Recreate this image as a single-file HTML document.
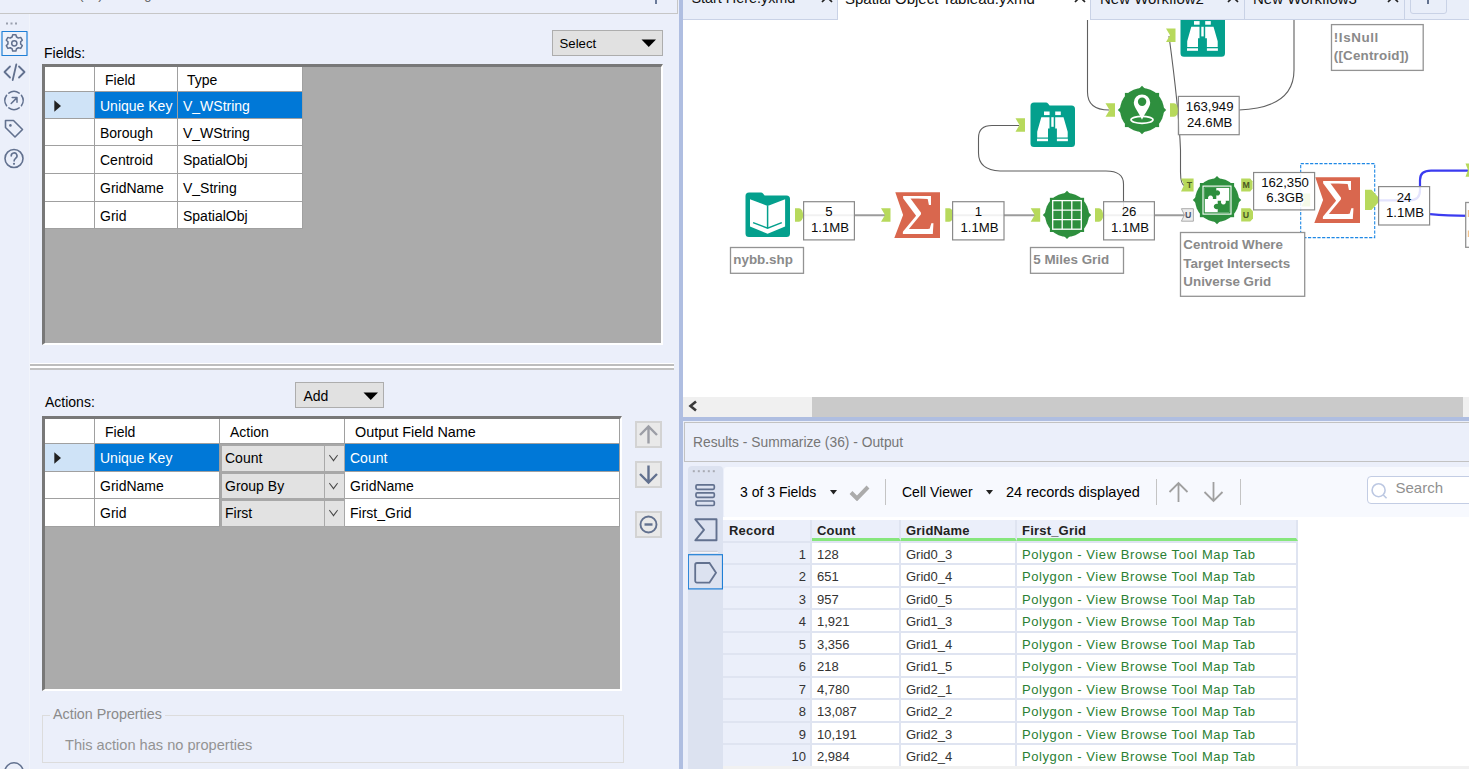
<!DOCTYPE html>
<html>
<head>
<meta charset="utf-8">
<title>Alteryx Designer</title>
<style>
html,body{margin:0;padding:0;}
body{width:1469px;height:769px;overflow:hidden;position:relative;background:#ebeffa;font-family:"Liberation Sans",sans-serif;font-size:14px;color:#000;}
.abs{position:absolute;}
.t{position:absolute;white-space:nowrap;line-height:1;}
/* ---------- left panel ---------- */
#left{position:absolute;left:0;top:0;width:679px;height:769px;background:#ebeffa;overflow:hidden;}
#divider{position:absolute;left:679px;top:0;width:4px;height:769px;background:#afbee1;}
.grid{position:absolute;background:#ababab;border-top:3px solid #787878;border-left:3px solid #787878;border-right:2px solid #fff;border-bottom:2px solid #fff;box-sizing:border-box;overflow:hidden;}
.cell{position:absolute;background:#fff;box-sizing:border-box;border-right:1px solid #a0a0a0;border-bottom:1px solid #a0a0a0;font-size:14px;line-height:1;white-space:nowrap;overflow:hidden;}
.cell span{position:absolute;left:6px;}
.sel{background:#0078d7;color:#fff;}
.rh{background:#fff;}
.rhsel{background:#cfe3f7;}
.btn{position:absolute;background:#e1e1e1;border:1px solid #adadad;box-sizing:border-box;}
/* ---------- right panel ---------- */
.tab{background:#e9eef9;border-right:1px solid #c9d2e6;border-bottom:1px solid #c9d2e6;box-sizing:border-box;}
.tabt{top:-9.500px;font-size:15px;color:#111;}
.sbtn{width:27px;height:27px;border:2px solid #d3d3d3;background:#e9e9e9;box-sizing:border-box;}
.sbtn svg{position:absolute;left:-2px;top:-2px;}
.combo{background:#e2e2e2;border:2px solid #a8a8a8;border-right:1px solid #a8a8a8;border-bottom:1px solid #a8a8a8;}
.combo i{position:absolute;right:0;top:0;bottom:0;width:19px;border-left:1px solid #a9a9a9;}
.combo i:after{content:"";position:absolute;left:5px;top:6px;width:6px;height:6px;border-right:1.3px solid #444;border-bottom:1.3px solid #444;transform:rotate(45deg) scale(1.05,1.05) skew(8deg,8deg);}
#right{position:absolute;left:683px;top:0;width:786px;height:769px;background:#fff;overflow:hidden;}

.rr{position:absolute;left:40px;width:576px;font-size:13px;}
.rc{position:absolute;top:0;bottom:0;box-sizing:border-box;background:#fff;border-right:2px solid #dfe4f1;border-bottom:2px solid #dfe4f1;overflow:hidden;white-space:nowrap;}
.rc span{position:absolute;left:5px;top:5px;line-height:1;color:#333;}
.c0{left:0;width:89px;background:#ebeffa;}
.c0 span{left:auto;right:4px;}
.c1{left:89px;width:89px;}
.c2{left:178px;width:116px;}
.c3{left:294px;width:281px;}
.grn span{color:#2a8033;letter-spacing:0.58px;}
.hd .rc{background:#ebeffa;font-weight:bold;border-bottom:none;}
.hd .rc span{color:#222;top:4px;letter-spacing:0.2px;}
.hd .gu{border-bottom:3px solid #86e67c;}
</style>
</head>
<body>
<div id="left">
  <!-- title bar -->
  <div class="abs" style="left:0;top:0;width:677px;height:13px;border-bottom:1px solid #c6c6c6;border-right:1px solid #c6c6c6;"></div>
  <div class="t" id="ttl" style="left:10px;top:-12.500px;font-size:13px;color:#5b5b5b;">Summarize (36) - Configuration</div>
  <div class="abs" style="left:655px;top:0;width:2px;height:4px;background:#6a7a9a;"></div>

  <!-- sidebar -->
  <div class="abs" style="left:0;top:14px;width:29px;height:755px;background:#ebeffa;border-right:1px solid #f1f4fb;"></div>
  <svg class="abs" style="left:0;top:14px;" width="30" height="755" viewBox="0 14 30 755" fill="none" stroke="#62718f" stroke-width="1.6" stroke-linecap="round" stroke-linejoin="round">
    <g stroke="none" fill="#9aa0ad"><rect x="6" y="22.5" width="2" height="2"/><rect x="10.5" y="22.5" width="2" height="2"/><rect x="15" y="22.5" width="2" height="2"/></g>
    <rect x="2" y="31.5" width="25" height="24" fill="#eef2fb" stroke="#1f7fd6" stroke-width="1.2"/>
    <!-- gear -->
    <g id="gear" transform="translate(14.3,43.3)">
      <path d="M-1.6,-8.6h3.2l.6,2.3a6.5,6.5 0 0 1 1.9,1.1l2.3,-.7l1.6,2.8l-1.7,1.6a6.5,6.5 0 0 1 0,2.2l1.7,1.6l-1.6,2.8l-2.3,-.7a6.5,6.5 0 0 1 -1.9,1.1l-.6,2.3h-3.2l-.6,-2.3a6.5,6.5 0 0 1 -1.9,-1.1l-2.3,.7l-1.6,-2.8l1.7,-1.6a6.5,6.5 0 0 1 0,-2.2l-1.7,-1.6l1.6,-2.8l2.3,.7a6.5,6.5 0 0 1 1.9,-1.1z" stroke-width="1.5"/>
      <circle r="2.6" stroke-width="1.5"/>
    </g>
    <!-- code -->
    <path d="M10,66.5l-5.5,5.5l5.5,5.5M19,66.5l5.5,5.5l-5.5,5.5M16.3,64.5l-3.6,15.5" stroke-width="1.8"/>
    <!-- share circle -->
    <g transform="translate(14,100.5)">
      <path d="M-5.200,-7.400a9,9 0 0 1 10.400,0M7.400,-5.200a9,9 0 0 1 0,10.400M5.200,7.400a9,9 0 0 1 -10.400,0M-7.400,5.200a9,9 0 0 1 0,-10.400" stroke-width="1.500"/>
      <path d="M-2.800,3l5.600,-5.600M-1.800,-3h4.800v4.800" stroke-width="1.500"/>
    </g>
    <!-- tag -->
    <g transform="translate(14,129)">
      <path d="M-8.5,-8.5h8l9,9l-7.5,7.5l-9.5,-9.5z"/>
      <circle cx="-3.6" cy="-3.6" r="1.3" fill="#62718f" stroke="none"/>
    </g>
    <!-- help -->
    <g transform="translate(14,158.5)">
      <circle r="9"/>
      <path d="M-2.8,-2.6a2.9,2.9 0 1 1 4.4,2.4c-1,.7 -1.5,1.2 -1.5,2.6" stroke-width="1.6"/>
      <circle cx="0" cy="5.3" r="1.1" fill="#62718f" stroke="none"/>
    </g>
    <!-- bottom circle -->
    <circle cx="14" cy="772" r="9.2"/>
  </svg>

  <!-- Fields -->
  <div class="t" id="lblFields" style="left:44px;top:46px;font-size:14px;">Fields:</div>
  <div class="btn" style="left:552px;top:30px;width:111px;height:26px;"></div>
  <div class="t" id="lblSelect" style="left:559.5px;top:36.5px;font-size:13.2px;">Select</div>
  <svg class="abs" style="left:641px;top:39px;" width="16" height="9"><path d="M0.5,0.5h14.5l-7.25,7.5z" fill="#000"/></svg>

  <div class="grid" id="g1" style="left:42px;top:64px;width:621px;height:281px;">
    <div class="cell rh" style="left:0;top:0;width:50px;height:25px;"></div>
    <div class="cell" style="left:50px;top:0;width:83px;height:25px;"><span style="left:10px;top:6px;">Field</span></div>
    <div class="cell" style="left:133px;top:0;width:125px;height:25px;"><span style="left:9px;top:6px;">Type</span></div>
    <div class="cell rhsel" style="left:0;top:25px;width:50px;height:27px;"><svg class="abs" style="left:8.5px;top:7.5px;" width="8" height="13"><path d="M0.3,0.3v11.4l6.7,-5.7z" fill="#222"/></svg></div>
    <div class="cell sel" style="left:50px;top:25px;width:83px;height:27px;"><span style="left:5px;top:7px;">Unique Key</span></div>
    <div class="cell sel" style="left:133px;top:25px;width:125px;height:27px;"><span style="left:5px;top:7px;">V_WString</span></div>
    <div class="cell rh" style="left:0;top:52px;width:50px;height:27px;"></div>
    <div class="cell" style="left:50px;top:52px;width:83px;height:27px;"><span style="left:5px;top:7px;">Borough</span></div>
    <div class="cell" style="left:133px;top:52px;width:125px;height:27px;"><span style="left:5px;top:7px;">V_WString</span></div>
    <div class="cell rh" style="left:0;top:79px;width:50px;height:28px;"></div>
    <div class="cell" style="left:50px;top:79px;width:83px;height:28px;"><span style="left:5px;top:7px;">Centroid</span></div>
    <div class="cell" style="left:133px;top:79px;width:125px;height:28px;"><span style="left:5px;top:7px;">SpatialObj</span></div>
    <div class="cell rh" style="left:0;top:107px;width:50px;height:28px;"></div>
    <div class="cell" style="left:50px;top:107px;width:83px;height:28px;"><span style="left:5px;top:7px;">GridName</span></div>
    <div class="cell" style="left:133px;top:107px;width:125px;height:28px;"><span style="left:5px;top:7px;">V_String</span></div>
    <div class="cell rh" style="left:0;top:135px;width:50px;height:27px;"></div>
    <div class="cell" style="left:50px;top:135px;width:83px;height:27px;"><span style="left:5px;top:7px;">Grid</span></div>
    <div class="cell" style="left:133px;top:135px;width:125px;height:27px;"><span style="left:5px;top:7px;">SpatialObj</span></div>
  </div>

  <!-- separator -->
  <div class="abs" style="left:30px;top:363px;width:644px;height:7px;background:#fff;"></div>
  <div class="abs" style="left:30px;top:364px;width:644px;height:2px;background:#bdbdbd;"></div>
  <div class="abs" style="left:30px;top:368px;width:644px;height:2px;background:#c2c2c2;"></div>

  <!-- Actions -->
  <div class="t" id="lblActions" style="left:45px;top:395px;font-size:14px;">Actions:</div>
  <div class="btn" style="left:295px;top:382px;width:89px;height:26px;"></div>
  <div class="t" id="lblAdd" style="left:303.5px;top:389px;font-size:14px;">Add</div>
  <svg class="abs" style="left:363px;top:391.5px;" width="16" height="9"><path d="M0.5,0.5h14.5l-7.25,7.5z" fill="#000"/></svg>

  <div class="grid" id="g2" style="left:42px;top:416px;width:580px;height:275px;">
    <div class="cell rh" style="left:0;top:0;width:50px;height:25px;"></div>
    <div class="cell" style="left:50px;top:0;width:125px;height:25px;"><span style="left:10px;top:6px;">Field</span></div>
    <div class="cell" style="left:175px;top:0;width:125px;height:25px;"><span style="left:10px;top:6px;">Action</span></div>
    <div class="cell" style="left:300px;top:0;width:275px;height:25px;"><span style="left:10px;top:6px;font-size:14.4px;">Output Field Name</span></div>
    <div class="cell rhsel" style="left:0;top:25px;width:50px;height:28px;"><svg class="abs" style="left:8.5px;top:7.5px;" width="8" height="13"><path d="M0.3,0.3v11.4l6.7,-5.7z" fill="#222"/></svg></div>
    <div class="cell sel" style="left:50px;top:25px;width:125px;height:28px;"><span style="left:5px;top:7px;">Unique Key</span></div>
    <div class="cell combo" style="left:175px;top:25px;width:125px;height:28px;"><span style="top:5px;left:3px;">Count</span><i></i></div>
    <div class="cell sel" style="left:300px;top:25px;width:275px;height:28px;"><span style="left:5px;top:7px;">Count</span></div>
    <div class="cell rh" style="left:0;top:53px;width:50px;height:27px;"></div>
    <div class="cell" style="left:50px;top:53px;width:125px;height:27px;"><span style="left:5px;top:7px;">GridName</span></div>
    <div class="cell combo" style="left:175px;top:53px;width:125px;height:27px;"><span style="top:5px;left:3px;">Group By</span><i></i></div>
    <div class="cell" style="left:300px;top:53px;width:275px;height:27px;"><span style="left:5px;top:7px;">GridName</span></div>
    <div class="cell rh" style="left:0;top:80px;width:50px;height:28px;"></div>
    <div class="cell" style="left:50px;top:80px;width:125px;height:28px;"><span style="left:5px;top:7px;">Grid</span></div>
    <div class="cell combo" style="left:175px;top:80px;width:125px;height:28px;"><span style="top:5px;left:3px;">First</span><i></i></div>
    <div class="cell" style="left:300px;top:80px;width:275px;height:28px;"><span style="left:5px;top:7px;">First_Grid</span></div>
  </div>

  <!-- side buttons -->
  <div class="abs sbtn" style="left:635px;top:421px;"><svg width="27" height="27" viewBox="0 0 27 27" fill="none" stroke="#9c9ea6" stroke-width="1.8"><path d="M13.5,22.500v-16.500M5,14l8.500,-8.500l8.500,8.500" stroke-width="2.400"/></svg></div>
  <div class="abs sbtn" style="left:635px;top:461px;"><svg width="27" height="27" viewBox="0 0 27 27" fill="none" stroke="#62718f" stroke-width="1.8"><path d="M13.5,4.500v16.500M5,13l8.500,8.500l8.500,-8.500" stroke-width="2.400"/></svg></div>
  <div class="abs sbtn" style="left:635px;top:511px;"><svg width="27" height="27" viewBox="0 0 27 27" fill="none" stroke="#62718f" stroke-width="1.5"><circle cx="13.5" cy="13.5" r="8" stroke-width="1.900"/><path d="M9.500,13.500h8" stroke-width="2.400"/></svg></div>

  <!-- Action properties -->
  <div class="abs" style="left:42px;top:715px;width:582px;height:48px;border:1px solid #dcdcdc;box-sizing:border-box;"></div>
  <div class="t" id="lblAP" style="left:50px;top:707px;font-size:14.3px;color:#8a8a8a;background:#ebeffa;padding:0 3px;">Action Properties</div>
  <div class="t" id="lblNoProp" style="left:65px;top:738px;font-size:14.6px;color:#939393;">This action has no properties</div>
</div>
<div id="divider"></div>

<div id="right">
  <!-- tabs -->
  <div class="abs" style="left:0;top:0;width:786px;height:20px;background:#e9eef9;border-bottom:1px solid #c9d2e6;box-sizing:border-box;"></div>
  <div class="abs" style="left:154px;top:0;width:253px;height:20px;background:#fff;"></div>
  <div class="abs" style="left:154px;top:0;width:1px;height:20px;background:#c9d2e6;"></div>
  <div class="abs" style="left:407px;top:0;width:1px;height:20px;background:#c9d2e6;"></div>
  <div class="abs" style="left:561px;top:0;width:1px;height:20px;background:#c9d2e6;"></div>
  <div class="abs" style="left:721px;top:0;width:1px;height:20px;background:#c9d2e6;"></div>
  <div class="abs" style="left:727px;top:-10px;width:37px;height:24px;border:1px solid #c9d2e6;border-radius:3px;box-sizing:border-box;"></div>
  <div class="abs" style="left:744px;top:0;width:2px;height:4px;background:#62718f;"></div>
  <div class="t tabt" id="tab1" style="left:8.400px;top:-9px;font-size:14.400px;">Start Here.yxmd</div>
  <div class="t tabt" id="tab2" style="left:162px;">Spatial Object Tableau.yxmd</div>
  <div class="t tabt" id="tab3" style="left:417px;">New Workflow2</div>
  <div class="t tabt" id="tab4" style="left:570px;">New Workflow3</div>
  <svg class="abs" style="left:138px;top:-9.300px;" width="12" height="12"><path d="M1,1l10,10M11,1l-10,10" stroke="#222" stroke-width="1.700"/></svg>
  <svg class="abs" style="left:391px;top:-9.300px;" width="12" height="12"><path d="M1,1l10,10M11,1l-10,10" stroke="#222" stroke-width="1.700"/></svg>
  <svg class="abs" style="left:544px;top:-9.300px;" width="12" height="12"><path d="M1,1l10,10M11,1l-10,10" stroke="#222" stroke-width="1.700"/></svg>
  <svg class="abs" style="left:704px;top:-9.300px;" width="12" height="12"><path d="M1,1l10,10M11,1l-10,10" stroke="#222" stroke-width="1.700"/></svg>

  <!-- canvas : svg coords are absolute page coords (viewBox offset) -->
  <svg class="abs" id="cv" style="left:0;top:20px;" width="786" height="377" viewBox="683 20 786 377">
    <defs>
      <g id="tealbox"><path d="M3.500,0h12.500q1.200,0 2,1l1.600,2.100h21.900a3.500,3.500 0 0 1 3.500,3.500v34.600a3.500,3.500 0 0 1 -3.500,3.500h-37.500a3.500,3.500 0 0 1 -3.500,-3.500v-37.700a3.500,3.500 0 0 1 3.500,-3.500z" fill="#04a08d"/></g>
      <g id="browse">
        <use href="#tealbox"/>
        <g fill="#fff">
          <rect x="14" y="9.100" width="5.600" height="3.600"/><rect x="25.200" y="9.100" width="5.600" height="3.600"/>
          <path d="M11.300,14.800h8.200v11.400h-1.500v8.900h-10.800v-5.800z"/>
          <path d="M33.500,14.800h-8.300v11.400h1.700v8.900h10.800v-5.800z"/>
          <rect x="21.300" y="14.800" width="2.400" height="9.600"/>
          <rect x="7" y="36.300" width="11" height="2.500"/><rect x="26.900" y="36.300" width="11" height="2.500"/>
        </g>
      </g>
      <g id="inputdata">
        <use href="#tealbox"/>
        <path d="M5,6.800l17.600,6.800l17.500,-6.800v27.200l-17.500,7.400l-17.600,-7.400z" fill="#fff"/>
        <path d="M22.600,13.600v22" stroke="#04a08d" stroke-width="1.500" fill="none"/>
        <path d="M8.100,30.200l14.500,5.600l14.200,-5.600" stroke="#04a08d" stroke-width="1.500" fill="none"/>
      </g>
      <g id="summ">
        <path d="M1,0h44.700v45.700h-45.700l8.800,-22.800z" fill="#d9674e"/>
        <text x="24.300" y="41.900" font-family="Liberation Serif, serif" font-size="56.500" fill="#fff" text-anchor="middle" textLength="36" lengthAdjust="spacingAndGlyphs">&#931;</text>
      </g>
      <g id="badge" fill="#2e8f3e"><circle r="21.900"/><rect x="-17.100" y="-17.100" width="34.200" height="34.200"/><rect x="-17.100" y="-17.100" width="34.200" height="34.200" transform="rotate(45)"/></g>
      <g id="ain"><path d="M0,0h9.500v13.400h-9.500l4,-6.700z" fill="#b7d95c"/></g>
      <g id="aout"><path d="M0,0h4a4.200,6.700 0 0 1 0,13.400h-4z" fill="#b7d95c"/></g>
    </defs>

    <!-- connection lines -->
    <g fill="none" stroke="#9c9c9c" stroke-width="2">
      <path d="M803,215.300H885"/>
      <path d="M952,215.300H1035"/>
      <path d="M1103,215.300H1185"/>
    </g>
    <g fill="none" stroke="#5f5f5f" stroke-width="1.100">
      <path d="M1123.500,215V184Q1123.500,171 1106,171H1000Q978.500,170 978.500,153V138Q978.500,125.500 992,125.500H1019"/>
      <path d="M1087.500,20V92Q1087.500,110 1109,110"/>
      <path d="M1169,36Q1179,110 1180.500,150V172Q1180.500,185 1185,186"/>
      <path d="M1239,110Q1294,108 1294,70V20"/>
    </g>
    <g fill="none" stroke="#3b3bf0" stroke-width="2.200">
      <path d="M1378,200.300H1410Q1420,200.300 1420,190V180Q1420,170.700 1431,170.700H1469"/>
      <path d="M1430,214.200Q1447,215.800 1469,215.800"/>
    </g>

    <!-- tools -->
    <use href="#inputdata" x="745" y="192.400"/>
    <use href="#aout" x="795" y="208.300"/>
    <use href="#ain" x="881" y="208.300"/>
    <use href="#summ" x="894.300" y="192.200"/>
    <use href="#aout" x="945.300" y="208.300"/>
    <use href="#ain" x="1030.700" y="208.300"/>
    <g transform="translate(1067,214.900)"><use href="#badge"/>
      <g fill="none" stroke="#fff" stroke-width="1.300"><rect x="-14.300" y="-14.300" width="28.600" height="28.600"/><path d="M-4.800,-14.300v28.600M4.800,-14.300v28.600M-14.300,-4.800h28.600M-14.300,4.800h28.600"/></g>
    </g>
    <use href="#aout" x="1095" y="208.300"/>

    <use href="#ain" x="1015.500" y="118.300"/>
    <use href="#browse" x="1030" y="102.400"/>

    <use href="#ain" x="1166" y="28.500"/>
    <use href="#browse" x="1180" y="12"/>

    <use href="#ain" x="1105.500" y="103.300"/>
    <g transform="translate(1142,110)"><use href="#badge"/>
      <path d="M0,-15.600a8.200,8.200 0 0 1 8.200,8.200c0,5 -5.200,10.200 -8.200,17.200c-3,-7 -8.200,-12.200 -8.200,-17.200a8.200,8.200 0 0 1 8.200,-8.200z" fill="#fff"/>
      <circle cx="0.100" cy="-8.300" r="4.200" fill="#2e8f3e"/>
      <ellipse cx="0" cy="9.800" rx="11" ry="3.500" fill="none" stroke="#fff" stroke-width="1.700"/>
    </g>
    <use href="#aout" x="1170" y="103.300"/>

    <!-- spatial match -->
    <path d="M1181,178.500h12.600v13.100h-12.600l3,-6.550z" fill="#b7d95c"/>
    <path d="M1181.400,208.700h12v12.500h-12l3,-6.250z" fill="#ededed" stroke="#a3a3a3" stroke-width="0.900"/>
    <g transform="translate(1217,200.100)"><use href="#badge"/>
      <rect x="-14" y="-14" width="28" height="28" fill="none" stroke="#fff" stroke-width="1.100"/>
      <rect x="-12.200" y="-12.200" width="24.400" height="24.400" fill="#fff"/>
      <path d="M-12.200,-12.200h11.500v2.700a2.600,2.600 0 1 1 0,4.600v3.900h-3.600a2.500,2.500 0 1 0 -4.400,0h-3.500z" fill="#2e8f3e"/>
      <path d="M12.200,12.200h-11.500v-3.400a2.700,2.700 0 1 1 0,-4.800v-3.300h3.500a2.500,2.500 0 1 0 4.400,0h3.600z" fill="#2e8f3e"/>
    </g>
    <path d="M1241.200,178.500h9l2.300,2.800v7.500l-2.300,2.800h-9z" fill="#b7d95c"/>
    <path d="M1241.200,208.300h9l2.800,3v7.100l-2.800,3h-9z" fill="#b7d95c"/>
    <g font-family="Liberation Sans, sans-serif" font-size="8.800" font-weight="bold" fill="#4b5a23" text-anchor="middle">
      <text x="1189.400" y="187.900">T</text><text x="1188.300" y="217.700" fill="#4a5268">U</text>
      <text x="1246.200" y="187.900">M</text><text x="1246" y="217.700">U</text>
    </g>

    <rect x="1300.700" y="163.600" width="74" height="74" fill="none" stroke="#1e88e5" stroke-width="1.100" stroke-dasharray="3.200,1.500"/>
    <path d="M1301.500,193.400h8.700v13.100h-8.700l3,-6.550z" fill="#b7d95c"/>
    <use href="#summ" x="1314.300" y="177.200"/>
    <path d="M1365,189.800h6.500l6.600,7.300v5.600l-6.600,7.300h-6.500z" fill="#b7d95c"/>
    <path d="M1465.500,163.500h6v13.200h-6l2.500,-6.600z" fill="#b7d95c"/>

    <!-- count boxes -->
    <g fill="#fff" fill-opacity="0.860" stroke="#8a8a8a" stroke-width="1.200">
      <rect x="803.600" y="201.700" width="50.800" height="38.200"/>
      <rect x="952.600" y="201.700" width="51.400" height="38.200"/>
      <rect x="1103.600" y="201.700" width="50.800" height="38.200"/>
      <rect x="1178.400" y="96.400" width="60.800" height="38.300"/>
      <rect x="1253.600" y="172.500" width="61" height="37.400"/>
      <rect x="1378.600" y="186.600" width="51" height="38.400"/>
    </g>
    <g font-family="Liberation Sans, sans-serif" font-size="13.200" fill="#0c0c0c" text-anchor="middle">
      <text x="829" y="216.300">5</text><text x="830" y="231.700">1.1MB</text>
      <text x="978.500" y="216.300">1</text><text x="979.500" y="231.700">1.1MB</text>
      <text x="1129" y="216.300">26</text><text x="1130" y="231.700">1.1MB</text>
      <text x="1209.700" y="111.300">163,949</text><text x="1209.700" y="126.600">24.6MB</text>
      <text x="1285" y="187.300">162,350</text><text x="1285" y="202.300">6.3GB</text>
      <text x="1404" y="201.700">24</text><text x="1405" y="217">1.1MB</text>
    </g>

    <!-- annotation labels -->
    <g fill="#fff" stroke="#939393" stroke-width="1.300">
      <rect x="730.500" y="247.500" width="73" height="25.800"/>
      <rect x="1030.500" y="247.500" width="93" height="25.800"/>
      <rect x="1180.500" y="232.500" width="124.200" height="63.800"/>
      <rect x="1331.500" y="24.600" width="91.700" height="45.800"/>
      <rect x="1465.700" y="202.500" width="10" height="44.800"/>
    </g>
    <g font-family="Liberation Sans, sans-serif" font-size="13.400" font-weight="bold" fill="#8a8a8a">
      <text x="733.300" y="263.500">nybb.shp</text>
      <text x="1033.300" y="263.500">5 Miles Grid</text>
      <text x="1183.300" y="249">Centroid Where</text>
      <text x="1183.300" y="267.700">Target Intersects</text>
      <text x="1183.300" y="286.400">Universe Grid</text>
      <text x="1333.800" y="42" textLength="44.500">!IsNull</text>
      <text x="1333.800" y="60.300" textLength="75">([Centroid])</text>
    </g>
    <rect x="1467.800" y="210" width="1.500" height="7" fill="#f2c38e"/><rect x="1467.800" y="230.500" width="1.500" height="6.500" fill="#f2c38e"/>
  </svg>
  <!-- scrollbar -->
  <div class="abs" style="left:0;top:397px;width:786px;height:20px;background:#f0f0f0;"></div>
  <div class="abs" style="left:129px;top:397px;width:651px;height:20px;background:#cacaca;"></div>
  <svg class="abs" style="left:5px;top:400px;" width="10" height="12"><path d="M8,1.500l-5.500,4.500l5.500,4.500" fill="none" stroke="#3a3a3a" stroke-width="2.600"/></svg>
  <!-- blue separator -->
  <div class="abs" style="left:0;top:417px;width:786px;height:4px;background:#afbee1;"></div>
  <!-- results header -->
  <div class="abs" style="left:0;top:421px;width:786px;height:348px;background:#ebeffa;"></div>
  <div class="abs" style="left:1px;top:422px;width:790px;height:40px;border:1px solid #c2c2c2;box-sizing:border-box;"></div>
  <div class="t" id="rtitle" style="left:10px;top:436px;font-size:13.8px;color:#767676;">Results - Summarize (36) - Output</div>
  <!-- results sidebar -->
  <div class="abs" style="left:5px;top:466px;width:35px;height:310px;background:#dce2f0;border-radius:4px 4px 0 0;"></div>
  <svg class="abs" style="left:5px;top:466px;" width="36" height="140" viewBox="0 0 36 140" fill="none" stroke="#62718f" stroke-width="1.700">
    <g stroke="none" fill="#a9abb3"><rect x="4.800" y="4.200" width="2" height="2"/><rect x="9.800" y="4.200" width="2" height="2"/><rect x="14.800" y="4.200" width="2" height="2"/><rect x="19.800" y="4.200" width="2" height="2"/><rect x="24.800" y="4.200" width="2" height="2"/></g>
    <rect x="8" y="18.800" width="18.300" height="4.500" rx="1.200"/><rect x="8" y="26.800" width="18.300" height="4.500" rx="1.200"/><rect x="8" y="35" width="18.300" height="4.500" rx="1.200"/>
    <path d="M7.300,53.300h21.200v21h-21.200l8.700,-10.500z" stroke-width="1.900" stroke-linejoin="round"/>
    <path d="M2.500,85.300h27" stroke="#c6c8cf" stroke-width="1"/><path d="M3,86.500h27" stroke="#f4f6fb" stroke-width="1.200"/>
    <rect x="0.300" y="88.700" width="34.200" height="34.200" fill="#dce2f0" stroke="#1f7fd6" stroke-width="1.200"/>
    <path d="M9,97h12.500l6.500,9.800l-6.500,9.800h-12.500a1.800,1.800 0 0 1 -1.800,-1.800v-16a1.800,1.800 0 0 1 1.800,-1.800z" stroke-width="1.800"/>
  </svg>
  <!-- toolbar -->
  <div class="abs" style="left:41px;top:466.500px;width:746px;height:51px;background:#f7f9fe;border-radius:3px 0 0 3px;"></div>
  <div class="t" id="tb1" style="left:57px;top:484.700px;font-size:14px;">3 of 3 Fields</div>
  <svg class="abs" style="left:147px;top:490px;" width="8" height="5"><path d="M0,0h7l-3.500,4.500z" fill="#222"/></svg>
  <svg class="abs" style="left:166px;top:483px;" width="22" height="18"><path d="M2,9.500l6,6l11,-11.500" fill="none" stroke="#ababab" stroke-width="4"/></svg>
  <div class="abs" style="left:202px;top:479px;width:1px;height:26px;background:#c4c4c4;"></div>
  <div class="t" id="tb2" style="left:219px;top:484.700px;font-size:14px;">Cell Viewer</div>
  <svg class="abs" style="left:303px;top:490px;" width="8" height="5"><path d="M0,0h7l-3.500,4.500z" fill="#222"/></svg>
  <div class="t" id="tb3" style="left:323px;top:484.500px;font-size:14.500px;">24 records displayed</div>
  <div class="abs" style="left:473px;top:479px;width:1px;height:26px;background:#c4c4c4;"></div>
  <svg class="abs" style="left:484px;top:481px;" width="60" height="22" fill="none" stroke="#a0a0a0" stroke-width="1.800"><path d="M11.500,21v-19M2.500,11l9,-9l9,9"/><path d="M46.500,1v19M37.500,11l9,9l9,-9"/></svg>
  <div class="abs" style="left:557px;top:479px;width:1px;height:26px;background:#c4c4c4;"></div>
  <div class="abs" style="left:684px;top:476px;width:120px;height:28px;background:#fff;border:1.300px solid #c3cde4;border-radius:4px;box-sizing:border-box;"></div>
  <svg class="abs" style="left:686px;top:480px;" width="22" height="22" fill="none" stroke="#bcc8e2" stroke-width="1.600"><circle cx="9.600" cy="10.200" r="6.500"/><path d="M14.300,15l3.300,3.300"/></svg>
  <div class="t" id="tbs" style="left:712.500px;top:480px;font-size:15px;color:#909090;">Search</div>
  <!-- table -->
  <div class="abs" style="left:40px;top:517px;width:746px;height:252px;background:#fff;"></div>
  <div class="abs" style="left:40px;top:541px;width:575px;height:2px;background:#dfe4f1;"></div>
  <div class="rr hd" style="top:520px;height:21px;"><div class="rc c0"><span style="left:6px;right:auto;">Record</span></div><div class="rc c1 gu"><span>Count</span></div><div class="rc c2 gu"><span>GridName</span></div><div class="rc c3 gu"><span>First_Grid</span></div></div>
  <div class="rr" style="top:543px;height:22px;"><div class="rc c0"><span>1</span></div><div class="rc c1"><span>128</span></div><div class="rc c2"><span>Grid0_3</span></div><div class="rc c3 grn"><span>Polygon - View Browse Tool Map Tab</span></div></div>
  <div class="rr" style="top:565px;height:23px;"><div class="rc c0"><span>2</span></div><div class="rc c1"><span>651</span></div><div class="rc c2"><span>Grid0_4</span></div><div class="rc c3 grn"><span>Polygon - View Browse Tool Map Tab</span></div></div>
  <div class="rr" style="top:588px;height:22px;"><div class="rc c0"><span>3</span></div><div class="rc c1"><span>957</span></div><div class="rc c2"><span>Grid0_5</span></div><div class="rc c3 grn"><span>Polygon - View Browse Tool Map Tab</span></div></div>
  <div class="rr" style="top:610px;height:23px;"><div class="rc c0"><span>4</span></div><div class="rc c1"><span>1,921</span></div><div class="rc c2"><span>Grid1_3</span></div><div class="rc c3 grn"><span>Polygon - View Browse Tool Map Tab</span></div></div>
  <div class="rr" style="top:633px;height:22px;"><div class="rc c0"><span>5</span></div><div class="rc c1"><span>3,356</span></div><div class="rc c2"><span>Grid1_4</span></div><div class="rc c3 grn"><span>Polygon - View Browse Tool Map Tab</span></div></div>
  <div class="rr" style="top:655px;height:23px;"><div class="rc c0"><span>6</span></div><div class="rc c1"><span>218</span></div><div class="rc c2"><span>Grid1_5</span></div><div class="rc c3 grn"><span>Polygon - View Browse Tool Map Tab</span></div></div>
  <div class="rr" style="top:678px;height:22px;"><div class="rc c0"><span>7</span></div><div class="rc c1"><span>4,780</span></div><div class="rc c2"><span>Grid2_1</span></div><div class="rc c3 grn"><span>Polygon - View Browse Tool Map Tab</span></div></div>
  <div class="rr" style="top:700px;height:23px;"><div class="rc c0"><span>8</span></div><div class="rc c1"><span>13,087</span></div><div class="rc c2"><span>Grid2_2</span></div><div class="rc c3 grn"><span>Polygon - View Browse Tool Map Tab</span></div></div>
  <div class="rr" style="top:723px;height:22px;"><div class="rc c0"><span>9</span></div><div class="rc c1"><span>10,191</span></div><div class="rc c2"><span>Grid2_3</span></div><div class="rc c3 grn"><span>Polygon - View Browse Tool Map Tab</span></div></div>
  <div class="rr" style="top:745px;height:23px;"><div class="rc c0"><span>10</span></div><div class="rc c1"><span>2,984</span></div><div class="rc c2"><span>Grid2_4</span></div><div class="rc c3 grn"><span>Polygon - View Browse Tool Map Tab</span></div></div>
  <div class="abs" style="left:40px;top:766px;width:746px;height:3px;background:#f1f1f1;"></div>
</div>
</body>
</html>
